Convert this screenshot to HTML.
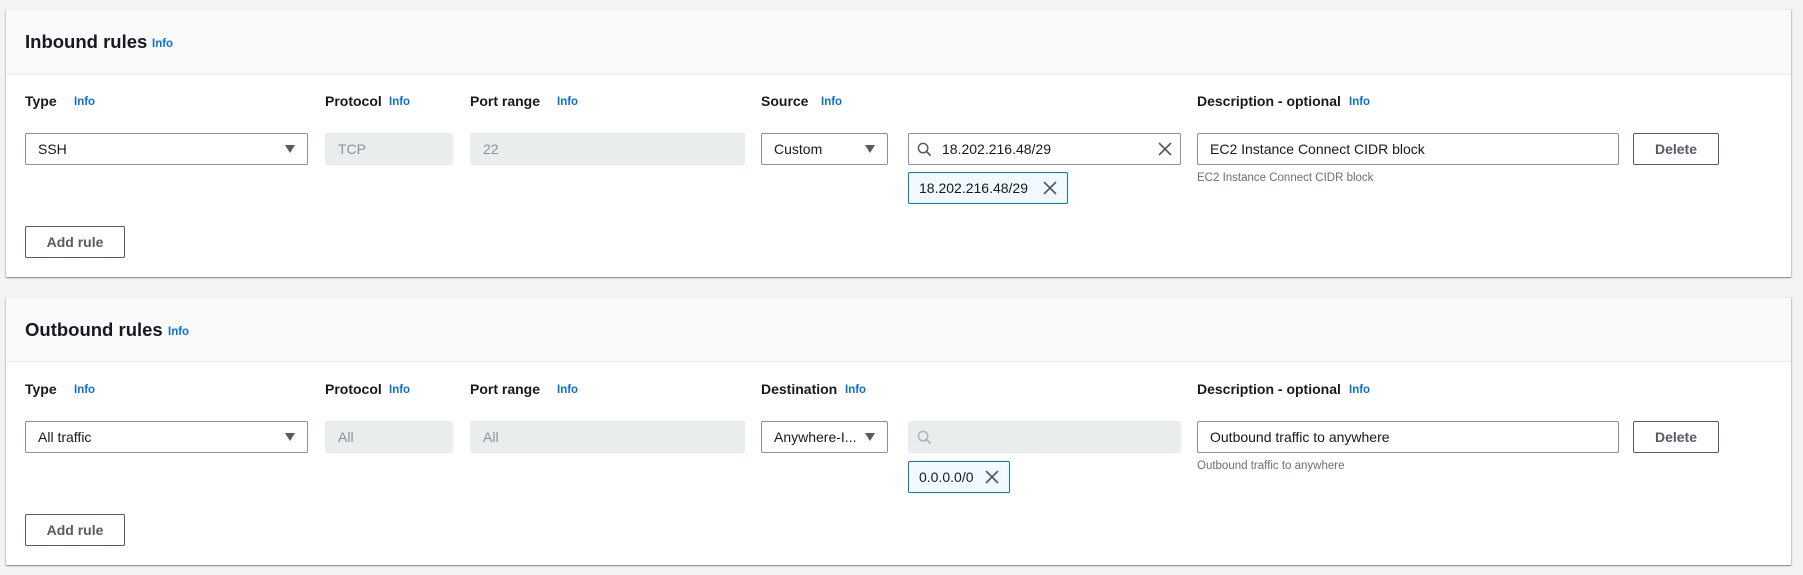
<!DOCTYPE html>
<html><head><style>
*{box-sizing:border-box;margin:0;padding:0}
body{width:1803px;height:575px;background:#f2f3f3;font-family:"Liberation Sans",Arial,sans-serif;position:relative;overflow:hidden;color:#16191f}
.panel{position:absolute;left:6px;width:1785px;background:#fff;box-shadow:0 1px 1px rgba(0,28,36,.3),1px 1px 1px rgba(0,28,36,.15),-1px 1px 1px rgba(0,28,36,.15);border-top:1px solid #eaeded}
.hdr{position:absolute;left:0;top:0;width:100%;background:#fafafa;border-bottom:1px solid #eaeded}
.title{position:absolute;left:19px;font-size:18.5px;font-weight:bold}
.info{position:absolute;color:#0972d3;font-size:11.5px;font-weight:bold}
.lbl{position:absolute;font-size:14px;font-weight:bold}
.box{position:absolute;height:32px;border:1px solid #879596;border-radius:2px;font-size:14px;line-height:30px;padding-left:12px;background:#fff}
.dis{border-color:#eaeded;background:#eaeded;color:#879596}
.arr{position:absolute;right:12px;top:11px;width:0;height:0;border-left:5px solid transparent;border-right:5px solid transparent;border-top:8px solid #545b64}
.btn{position:absolute;height:32px;border:1px solid #545b64;border-radius:2px;font-size:14px;font-weight:bold;text-align:center;line-height:30px;color:#545b64;background:#fff}
.tok{position:absolute;height:32px;border:1px solid #0972d3;border-radius:2px;background:#f1faff;font-size:14px;line-height:30px;padding-left:10px}
.help{position:absolute;font-size:11.5px;color:#687078}
svg{position:absolute}
</style></head><body>

<div class="panel" style="top:9px;height:268px">
 <div class="hdr" style="height:65px"></div>
 <div class="title" style="top:21px">Inbound rules</div><span class="info" style="left:146px;top:28px">Info</span>
 <div class="lbl" style="left:19px;top:83px">Type</div><span class="info" style="left:68px;top:86px">Info</span>
 <div class="lbl" style="left:319px;top:83px">Protocol</div><span class="info" style="left:383px;top:86px">Info</span>
 <div class="lbl" style="left:464px;top:83px">Port range</div><span class="info" style="left:551px;top:86px">Info</span>
 <div class="lbl" style="left:755px;top:83px">Source</div><span class="info" style="left:815px;top:86px">Info</span>
 <div class="lbl" style="left:1191px;top:83px">Description - optional</div><span class="info" style="left:1343px;top:86px">Info</span>
 <div class="box" style="left:19px;top:123px;width:283px">SSH<div class="arr"></div></div>
 <div class="box dis" style="left:319px;top:123px;width:128px">TCP</div>
 <div class="box dis" style="left:464px;top:123px;width:275px">22</div>
 <div class="box" style="left:755px;top:123px;width:127px">Custom<div class="arr"></div></div>
 <div class="box" style="left:902px;top:123px;width:273px;padding-left:33px">18.202.216.48/29
  <svg style="left:8px;top:8px" width="15" height="15" viewBox="0 0 16 16"><circle cx="6.5" cy="6.5" r="5" fill="none" stroke="#545b64" stroke-width="1.6"/><path d="M10 10l4.5 4.5" stroke="#545b64" stroke-width="1.8"/></svg>
  <svg style="right:8px;top:8px" width="14" height="14" viewBox="0 0 14 14"><path d="M1 1l12 12M13 1L1 13" stroke="#545b64" stroke-width="1.7"/></svg></div>
 <div class="tok" style="left:902px;top:162px;width:160px">18.202.216.48/29
  <svg style="right:10px;top:8px" width="14" height="14" viewBox="0 0 14 14"><path d="M1 1l12 12M13 1L1 13" stroke="#545b64" stroke-width="1.7"/></svg></div>
 <div class="box" style="left:1191px;top:123px;width:422px">EC2 Instance Connect CIDR block</div>
 <div class="btn" style="left:1627px;top:123px;width:86px">Delete</div>
 <div class="help" style="left:1191px;top:162px">EC2 Instance Connect CIDR block</div>
 <div class="btn" style="left:19px;top:216px;width:100px">Add rule</div>
</div>

<div class="panel" style="top:297px;height:268px">
 <div class="hdr" style="height:64px"></div>
 <div class="title" style="top:21px">Outbound rules</div><span class="info" style="left:162px;top:28px">Info</span>
 <div class="lbl" style="left:19px;top:83px">Type</div><span class="info" style="left:68px;top:86px">Info</span>
 <div class="lbl" style="left:319px;top:83px">Protocol</div><span class="info" style="left:383px;top:86px">Info</span>
 <div class="lbl" style="left:464px;top:83px">Port range</div><span class="info" style="left:551px;top:86px">Info</span>
 <div class="lbl" style="left:755px;top:83px">Destination</div><span class="info" style="left:839px;top:86px">Info</span>
 <div class="lbl" style="left:1191px;top:83px">Description - optional</div><span class="info" style="left:1343px;top:86px">Info</span>
 <div class="box" style="left:19px;top:123px;width:283px">All traffic<div class="arr"></div></div>
 <div class="box dis" style="left:319px;top:123px;width:128px">All</div>
 <div class="box dis" style="left:464px;top:123px;width:275px">All</div>
 <div class="box" style="left:755px;top:123px;width:127px">Anywhere-I...<div class="arr"></div></div>
 <div class="box dis" style="left:902px;top:123px;width:273px">
  <svg style="left:8px;top:8px" width="15" height="15" viewBox="0 0 16 16"><circle cx="6.5" cy="6.5" r="5" fill="none" stroke="#aab7b8" stroke-width="1.6"/><path d="M10 10l4.5 4.5" stroke="#aab7b8" stroke-width="1.8"/></svg></div>
 <div class="tok" style="left:902px;top:163px;width:102px">0.0.0.0/0
  <svg style="right:10px;top:8px" width="14" height="14" viewBox="0 0 14 14"><path d="M1 1l12 12M13 1L1 13" stroke="#545b64" stroke-width="1.7"/></svg></div>
 <div class="box" style="left:1191px;top:123px;width:422px">Outbound traffic to anywhere</div>
 <div class="btn" style="left:1627px;top:123px;width:86px">Delete</div>
 <div class="help" style="left:1191px;top:162px">Outbound traffic to anywhere</div>
 <div class="btn" style="left:19px;top:216px;width:100px">Add rule</div>
</div>
</body></html>
